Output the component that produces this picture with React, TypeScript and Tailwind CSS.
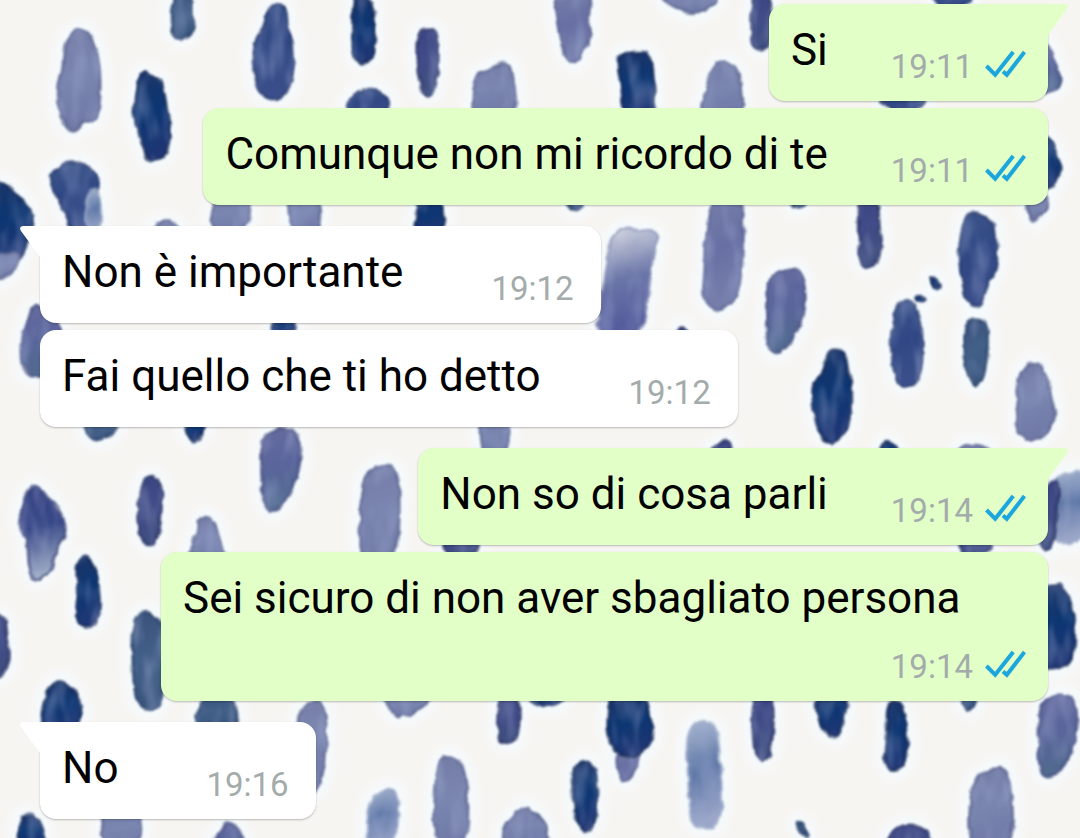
import React from 'react';
import clsx from 'clsx';

interface Message {
  id: number;
  text: string;
  time: string;
  mine?: boolean;
  first?: boolean;
}

const messages: Message[] = [
  { id: 1, text: 'Si', time: '19:11', mine: true, first: true },
  { id: 2, text: 'Comunque non mi ricordo di te', time: '19:11', mine: true },
  { id: 3, text: 'Non è importante', time: '19:12', first: true },
  { id: 4, text: 'Fai quello che ti ho detto', time: '19:12' },
  { id: 5, text: 'Non so di cosa parli', time: '19:14', mine: true, first: true },
  { id: 6, text: 'Sei sicuro di non aver sbagliato persona', time: '19:14', mine: true },
  { id: 7, text: 'No', time: '19:16', first: true },
];

// Watercolour inks, top / middle / bottom of a brush mark plus its darker rim
const inks: Record<string, [string, string, string, string]> = {
  navy: ['#1d3568', '#0c3672', '#1f3674', '#0f2450'],
  blue: ['#3c558a', '#2f4784', '#3a4f8a', '#233466'],
  indigo: ['#3a4380', '#414c88', '#3f4e80', '#272f60'],
  steel: ['#38507a', '#426088', '#38547c', '#243a62'],
  slate: ['#737ba4', '#7a85b0', '#7079a6', '#555e88'],
  lavender: ['#7680a8', '#686fa4', '#767fab', '#545d8c'],
  plum: ['#666c9e', '#5a659c', '#506a8e', '#424a7c'],
  mist: ['#dfe1e6', '#6a75a8', '#50579a', '#8d93b5'],
  haze: ['#a9b7cf', '#6079a8', '#9ba6c8', '#a0adc9'],
  drip: ['#333f80', '#384888', '#a3b0c8', '#353f72'],
};

// [ink, outline points]
const marks: [string, string][] = [
  ['slate', '80,28 92,36 97,50 101,80 99,116 92,122 84,120 78,131 68,132 60,118 57,90 63,68 64,44 70,34'],
  ['steel', '171,-5 193,-5 192,20 195,32 181,40 171,36'],
  ['navy', '143,70 150,76 161,78 165,95 170,130 169,150 158,160 148,162 144,148 133,118 135,98 138,82'],
  ['blue', '268,6 280,3 287,10 287,28 294,44 293,78 286,94 274,101 260,94 254,78 252,44 264,28'],
  ['navy', '354,-5 372,-2 375,20 375,40 374,58 362,65 353,60 352,20'],
  ['blue', '348,104 354,92 370,88 386,92 391,110 370,118 346,110'],
  ['indigo', '417,32 430,27 439,34 438,80 431,99 420,88 416,60'],
  ['slate', '478,72 485,72 500,62 510,62 514,80 518,120 472,120 473,88'],
  ['lavender', '552,-8 592,-8 588,20 591,40 582,50 579,62 570,62 562,50 558,28'],
  ['slate', '655,-6 716,-8 717,3 705,10 692,14 675,8'],
  ['indigo', '752,-8 770,-8 772,20 770,46 760,51 751,44'],
  ['navy', '619,54 634,52 650,52 654,75 655,120 624,120 622,90 617,64'],
  ['slate', '708,80 715,66 724,60 736,66 740,80 744,120 700,120 704,95'],
  ['blue', '930,-6 976,-6 966,6 938,6'],
  ['plum', '1040,40 1048,45 1056,65 1062,82 1056,90 1040,94'],
  ['blue', '876,94 932,94 918,112 892,112'],
  ['navy', '1040,134 1050,138 1056,152 1062,168 1055,186 1040,192'],
  ['slate', '1024,198 1046,196 1049,206 1040,216 1036,222 1030,218'],
  ['indigo', '859,192 877,192 880,230 882,258 870,267 859,264 859,235'],
  ['blue', '967,215 977,211 995,223 996,245 998,267 985,290 982,308 967,306 962,280 958,258 962,227'],
  ['steel', '966,322 978,317 989,325 986,373 977,390 966,377 964,340'],
  ['slate', '1025,364 1038,362 1047,377 1052,400 1057,420 1034,446 1014,427 1020,400 1017,382'],
  ['blue', '903,297 915,303 923,327 922,377 907,389 896,382 890,347 893,317'],
  ['navy', '929,276 934,275 941,288 936,290'],
  ['navy', '915,300 921,296 927,300 920,304'],
  ['navy', '826,351 837,349 846,353 847,367 853,390 850,427 833,447 817,433 812,397 813,382 825,370'],
  ['plum', '767,278 787,268 803,270 807,308 795,338 780,354 770,352 765,340 768,300'],
  ['lavender', '707,220 714,196 740,196 744,227 740,297 720,312 702,303 705,267'],
  ['mist', '612,230 640,228 660,234 653,260 648,296 642,340 596,340 600,300 608,262'],
  ['navy', '-12,178 8,185 22,198 34,215 30,235 22,258 10,262 -12,264'],
  ['slate', '-12,256 22,250 16,268 8,277 -12,280'],
  ['blue', '49,173 65,162 85,163 99,176 98,196 90,236 74,238 62,205 51,186'],
  ['haze', '84,196 101,184 101,236 88,236'],
  ['slate', '214,192 253,192 246,236 210,236'],
  ['slate', '286,192 320,192 320,236 292,236'],
  ['slate', '148,234 158,222 172,221 184,234'],
  ['navy', '416,196 442,196 446,234 412,234 418,212'],
  ['steel', '564,198 588,198 576,214'],
  ['steel', '786,200 812,200 798,210'],
  ['plum', '36,302 48,316 62,326 62,370 38,378 23,374 21,340 28,320'],
  ['navy', '274,318 294,318 298,336 270,336'],
  ['indigo', '674,334 682,325 692,334'],
  ['steel', '82,418 122,418 110,440 88,439'],
  ['navy', '181,418 210,418 198,441 190,441'],
  ['slate', '478,418 510,418 506,456 482,456'],
  ['indigo', '706,450 722,444 728,438 732,452'],
  ['navy', '878,454 884,440 896,446 900,454'],
  ['slate', '956,454 962,444 986,444 990,454'],
  ['plum', '262,434 283,427 298,432 302,463 290,493 277,513 263,507 261,470'],
  ['indigo', '139,482 153,474 163,483 160,537 150,548 138,537'],
  ['drip', '29,487 39,485 50,500 63,515 67,533 54,553 50,573 35,583 28,563 28,543 19,522 22,504'],
  ['navy', '78,562 87,554 98,573 101,620 87,628 76,623 79,590 76,573'],
  ['slate', '198,517 213,517 219,538 226,562 190,562 191,540 199,534'],
  ['slate', '362,480 375,466 398,466 400,510 397,562 359,562 360,520'],
  ['indigo', '-8,612 6,618 7,636 10,650 9,668 -8,684'],
  ['steel', '134,614 152,611 168,630 164,708 140,711 134,690 132,653'],
  ['navy', '40,734 46,690 60,678 79,693 82,734'],
  ['steel', '203,694 234,694 240,732 193,732'],
  ['slate', '296,722 302,708 314,701 325,706 327,735 325,765 318,792 308,790'],
  ['slate', '380,694 432,694 425,706 415,711 411,717 403,713 397,718 388,706'],
  ['indigo', '498,692 520,692 519,739 508,744 497,740 499,715'],
  ['navy', '524,694 568,694 558,706 538,706'],
  ['lavender', '616,752 641,752 637,768 625,784 617,772'],
  ['navy', '610,694 645,694 648,712 656,733 640,757 617,757 607,733 608,712'],
  ['navy', '572,767 587,760 597,768 597,817 588,835 575,820 574,790'],
  ['slate', '436,758 453,755 467,770 469,850 433,850'],
  ['slate', '503,827 515,814 528,804 548,827 548,850 503,850'],
  ['haze', '366,850 368,805 378,792 400,786 396,850'],
  ['haze', '686,724 715,721 720,750 723,823 705,829 691,823 688,780'],
  ['indigo', '752,692 774,692 773,747 763,764 753,753'],
  ['navy', '812,692 850,692 843,730 837,738 822,732'],
  ['navy', '886,704 897,700 905,713 909,763 893,773 884,765 888,735'],
  ['steel', '960,692 978,692 974,709 965,709'],
  ['plum', '1041,703 1057,693 1076,698 1078,733 1067,763 1050,779 1038,771 1039,720'],
  ['slate', '975,775 990,772 1000,765 1008,773 1014,813 1010,850 970,850 969,805'],
  ['indigo', '882,848 897,826 917,824 930,836 930,848'],
  ['steel', '796,821 803,823 809,836 803,837'],
  ['haze', '1044,484 1062,474 1088,470 1088,542 1048,544'],
  ['indigo', '1040,492 1060,474 1057,520 1053,549 1040,552'],
  ['navy', '1040,588 1057,583 1070,593 1076,633 1073,660 1060,669 1040,670'],
  ['indigo', '956,540 994,540 986,556 964,556'],
  ['indigo', '440,540 482,540 474,556 448,556'],
  ['navy', '20,816 30,814 42,822 47,850 16,850'],
  ['slate', '103,808 142,808 142,850 101,850'],
  ['plum', '208,848 218,832 230,819 240,832 246,848'],
];

// Closed curve that runs through the middle of each edge of the outline
function toPath(points: string) {
  const pts = points.split(' ').map((p) => p.split(',').map(Number));
  const mid = (a: number[], b: number[]) => `${(a[0] + b[0]) / 2} ${(a[1] + b[1]) / 2}`;
  const start = mid(pts[pts.length - 1], pts[0]);
  const curves = pts.map((p, i) => `Q${p[0]} ${p[1]} ${mid(p, pts[(i + 1) % pts.length])}`);
  return `M${start}${curves.join('')}Z`;
}

const Wallpaper: React.FC = () => (
  <svg
    className="absolute inset-0 w-full h-full"
    viewBox="0 0 1080 838"
    preserveAspectRatio="xMidYMin slice"
    aria-hidden="true"
  >
    <defs>
      {Object.entries(inks).map(([name, [top, middle, bottom]]) => (
        <linearGradient key={name} id={name} x1="0" y1="0" x2="0.15" y2="1">
          <stop offset="0" stopColor={top} />
          <stop offset="0.5" stopColor={middle} />
          <stop offset="1" stopColor={bottom} />
        </linearGradient>
      ))}
      {/* wobbly outline plus faint lighter streaks inside each mark */}
      <filter id="soft" x="0" y="0" width="100%" height="100%" colorInterpolationFilters="sRGB">
        <feTurbulence type="fractalNoise" baseFrequency="0.08" numOctaves="2" seed="4" result="noise" />
        <feDisplacementMap in="SourceGraphic" in2="noise" scale="6" xChannelSelector="R" yChannelSelector="G" result="shape" />
        <feTurbulence type="fractalNoise" baseFrequency="0.07 0.025" numOctaves="2" seed="9" />
        <feColorMatrix
          type="matrix"
          values="0 0 0 0 0.62  0 0 0 0 0.67  0 0 0 0 0.82  0 0 1 0 -0.42"
        />
        <feComposite in2="shape" operator="in" result="streaks" />
        <feMerge>
          <feMergeNode in="shape" />
          <feMergeNode in="streaks" />
        </feMerge>
        <feGaussianBlur stdDeviation="1" />
      </filter>
      <filter id="halo" x="0" y="0" width="100%" height="100%">
        <feGaussianBlur stdDeviation="4" />
      </filter>
    </defs>
    <rect width="1080" height="838" fill="#f7f5f2" />
    <g filter="url(#halo)">
      {marks.map(([, points], i) => (
        <path key={i} d={toPath(points)} fill="#f5fafd" stroke="#f5fafd" strokeWidth="18" />
      ))}
    </g>
    <g filter="url(#soft)">
      {marks.map(([ink, points], i) => (
        <path
          key={i}
          d={toPath(points)}
          fill={`url(#${ink})`}
          stroke={inks[ink][3]}
          strokeWidth="3"
          strokeOpacity="0.65"
        />
      ))}
    </g>
  </svg>
);

const ReadTicks: React.FC = () => (
  <svg
    className="w-[41px] h-[28px] mb-2 shrink-0"
    viewBox="0 0 41 28"
    fill="none"
    stroke="#1ba6de"
    strokeWidth="4"
    role="img"
    aria-label="Letto"
  >
    <path d="M1.500 16L10.200 24.800L28.200 2" />
    <path d="M18 21.500L21.800 24.800L39.500 2" />
  </svg>
);

const Tail: React.FC<{ mine?: boolean }> = ({ mine }) => (
  <svg
    className={clsx(
      'absolute top-0 w-5 h-8',
      mine ? 'left-full text-[#e1ffc7]' : 'right-full text-white -scale-x-100'
    )}
    viewBox="0 0 20 32"
    fill="currentColor"
    aria-hidden="true"
  >
    <path d="M-1 0H17Q21.500 0.500 19 5L0 31H-1Z" />
  </svg>
);

const Bubble: React.FC<{ message: Message }> = ({ message }) => {
  const { text, time, mine, first } = message;

  return (
    <li
      className={clsx(
        'relative flex flex-wrap max-w-[887px] pt-5 pb-[15px] rounded-2xl shadow-[0_1px_2px_rgba(0,0,0,0.25)]',
        mine ? 'self-end bg-[#e1ffc7] gap-x-[63px] px-[22px]' : 'self-start bg-white gap-x-[88px] pl-[22px] pr-[27px]',
        first && (mine ? 'rounded-tr-none' : 'rounded-tl-none'),
        first ? 'mt-[21px] first:mt-0' : 'mt-[7px]'
      )}
    >
      {first && <Tail mine={mine} />}
      <p className="text-[44px] leading-[52px] text-black">{text}</p>
      <div className="ml-auto h-[62px] flex items-end gap-3">
        <time className="text-[33px] leading-[38px] text-[#a3abab]">{time}</time>
        {mine && <ReadTicks />}
      </div>
    </li>
  );
};

const App: React.FC = () => {
  return (
    <main className="relative min-h-screen overflow-hidden bg-[#f7f5f2] font-['Roboto',sans-serif]">
      <Wallpaper />
      <ul className="relative flex flex-col pt-1 pb-[18px] pl-10 pr-8">
        {messages.map((message) => (
          <Bubble key={message.id} message={message} />
        ))}
      </ul>
    </main>
  );
};

export default App;
